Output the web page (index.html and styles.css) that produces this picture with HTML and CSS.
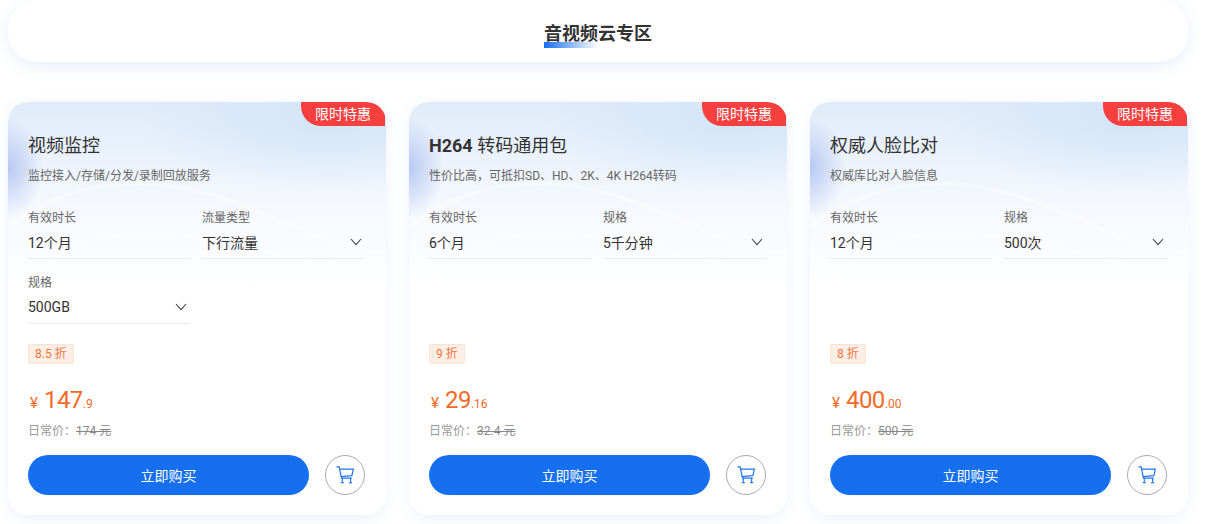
FILE: index.html
```html
<!DOCTYPE html>
<html lang="zh-CN">
<head>
  <meta charset="UTF-8" />
  <title>音视频云专区</title>
  <link rel="stylesheet" href="styles.css">
</head>
<body>
  <div class="page">
    <div class="zone-head">
      <h2 class="zone-title">音视频云专区</h2>
    </div>

    <div class="card-list">
      <div class="card">
        <svg class="card-wave" viewBox="0 0 378 180" preserveAspectRatio="none"><path d="M0 125C60 80 130 70 210 95S320 150 378 150" /><path d="M20 180C70 130 120 125 190 135S320 170 378 165" /></svg>
        <span class="promo">限时特惠</span>
        <h3 class="card-title">视频监控</h3>
        <p class="card-desc">监控接入/存储/分发/录制回放服务</p>
        <div class="fields">
          <div class="field">
            <span class="field-label">有效时长</span>
            <div class="field-value">12个月</div>
          </div>
          <div class="field">
            <span class="field-label">流量类型</span>
            <div class="field-value">下行流量
              <svg class="arrow" viewBox="0 0 12 8"><path d="M1 1l5 5.6L11 1" /></svg>
            </div>
          </div>
          <div class="field">
            <span class="field-label">规格</span>
            <div class="field-value">500GB
              <svg class="arrow" viewBox="0 0 12 8"><path d="M1 1l5 5.6L11 1" /></svg>
            </div>
          </div>
        </div>
        <span class="discount">8.5 折</span>
        <div class="price"><span class="yen">¥</span><span class="amount">147</span><span class="cents">.9</span></div>
        <div class="old-price">日常价：<s>174 元</s></div>
        <div class="actions">
          <button class="buy" type="button">立即购买</button>
          <button class="cart" type="button">
            <svg viewBox="0 0 18 18"><path d="M.5 .8h2.6l2.4 11.4h10.3M3.5 3.2h13.8l-1.4 6.4-11 1" /><path d="M6.3 12.2v3.6M14.6 12.2v3.6" /><path d="M4.8 16.6h3M13.1 16.6h3" /></svg>
          </button>
        </div>
      </div>

      <div class="card">
        <svg class="card-wave" viewBox="0 0 378 180" preserveAspectRatio="none"><path d="M0 125C60 80 130 70 210 95S320 150 378 150" /><path d="M20 180C70 130 120 125 190 135S320 170 378 165" /></svg>
        <span class="promo">限时特惠</span>
        <h3 class="card-title"><b>H264</b> 转码通用包</h3>
        <p class="card-desc">性价比高，可抵扣SD、HD、2K、4K H264转码</p>
        <div class="fields">
          <div class="field">
            <span class="field-label">有效时长</span>
            <div class="field-value">6个月</div>
          </div>
          <div class="field">
            <span class="field-label">规格</span>
            <div class="field-value">5千分钟
              <svg class="arrow" viewBox="0 0 12 8"><path d="M1 1l5 5.6L11 1" /></svg>
            </div>
          </div>
        </div>
        <span class="discount">9 折</span>
        <div class="price"><span class="yen">¥</span><span class="amount">29</span><span class="cents">.16</span></div>
        <div class="old-price">日常价：<s>32.4 元</s></div>
        <div class="actions">
          <button class="buy" type="button">立即购买</button>
          <button class="cart" type="button">
            <svg viewBox="0 0 18 18"><path d="M.5 .8h2.6l2.4 11.4h10.3M3.5 3.2h13.8l-1.4 6.4-11 1" /><path d="M6.3 12.2v3.6M14.6 12.2v3.6" /><path d="M4.8 16.6h3M13.1 16.6h3" /></svg>
          </button>
        </div>
      </div>

      <div class="card">
        <svg class="card-wave" viewBox="0 0 378 180" preserveAspectRatio="none"><path d="M0 125C60 80 130 70 210 95S320 150 378 150" /><path d="M20 180C70 130 120 125 190 135S320 170 378 165" /></svg>
        <span class="promo">限时特惠</span>
        <h3 class="card-title">权威人脸比对</h3>
        <p class="card-desc">权威库比对人脸信息</p>
        <div class="fields">
          <div class="field">
            <span class="field-label">有效时长</span>
            <div class="field-value">12个月</div>
          </div>
          <div class="field">
            <span class="field-label">规格</span>
            <div class="field-value">500次
              <svg class="arrow" viewBox="0 0 12 8"><path d="M1 1l5 5.6L11 1" /></svg>
            </div>
          </div>
        </div>
        <span class="discount">8 折</span>
        <div class="price"><span class="yen">¥</span><span class="amount">400</span><span class="cents">.00</span></div>
        <div class="old-price">日常价：<s>500 元</s></div>
        <div class="actions">
          <button class="buy" type="button">立即购买</button>
          <button class="cart" type="button">
            <svg viewBox="0 0 18 18"><path d="M.5 .8h2.6l2.4 11.4h10.3M3.5 3.2h13.8l-1.4 6.4-11 1" /><path d="M6.3 12.2v3.6M14.6 12.2v3.6" /><path d="M4.8 16.6h3M13.1 16.6h3" /></svg>
          </button>
        </div>
      </div>
    </div>
  </div>
</body>
</html>
```

FILE: styles.css
```css
* {
  box-sizing: border-box;
  font-family: 'Roboto', 'Noto Sans CJK SC', sans-serif;
}
html, body {
  height: 100%;
}
body {
  margin: 0;
  background: #fff;
  overflow: hidden;
}
.page {
  padding: 0 18px 0 8px;
}
.zone-head {
  height: 62px;
  background: #fff;
  border-radius: 28px;
  box-shadow: 0 4px 16px rgba(120, 165, 240, 0.18);
  display: flex;
  justify-content: center;
  padding-top: 22px;
}
.zone-title {
  position: relative;
  margin: 0;
  height: 24px;
  font-size: 18px;
  line-height: 24px;
  font-weight: 700;
  color: #333;
}
.zone-title::after {
  content: "";
  position: absolute;
  left: 0;
  top: 20px;
  width: 54px;
  height: 6px;
  background: linear-gradient(90deg, #166fee, rgba(22, 111, 238, 0));
}
.card-list {
  display: flex;
  gap: 23px;
  margin-top: 40px;
}
.card {
  position: relative;
  flex: 1;
  height: 413px;
  display: flex;
  flex-direction: column;
  align-items: flex-start;
  padding: 31px 20px 20px;
  border-radius: 20px;
  overflow: hidden;
  background:
    radial-gradient(35px 50px at 0 66px, rgba(170, 190, 240, 0.8), rgba(170, 190, 240, 0)),
    radial-gradient(190px 70px at 320px 20px, rgba(205, 227, 248, 0.8), rgba(205, 227, 248, 0)),
    linear-gradient(180deg, #e0ebf9 0, #e9f1fb 45px, #f2f6fd 85px, #f8fafe 125px, #fcfdff 160px, #fff 190px);
  box-shadow: 0 4px 14px rgba(120, 165, 240, 0.14);
}
.card-wave {
  position: absolute;
  left: 0;
  top: 0;
  width: 100%;
  height: 180px;
  fill: none;
  stroke: rgba(255, 255, 255, 0.35);
  stroke-width: 4;
}
.promo {
  position: absolute;
  right: 1px;
  top: 0;
  width: 84px;
  height: 24px;
  background: #f5403f;
  border-radius: 0 0 0 20px;
  color: #fff;
  font-size: 14px;
  line-height: 24px;
  text-align: center;
}
.card-title {
  position: relative;
  margin: 0;
  height: 26px;
  font-size: 18px;
  line-height: 26px;
  font-weight: 400;
  color: #333;
}
.card-title b {
  font-weight: 700;
}
.card-desc {
  position: relative;
  margin: 8px 0 0;
  font-size: 12px;
  line-height: 18px;
  color: #666;
}
.fields {
  position: relative;
  width: 100%;
  display: grid;
  grid-template-columns: 162px 163px;
  column-gap: 12px;
  row-gap: 15px;
  margin-top: 24px;
}
.field-label {
  display: block;
  height: 18px;
  font-size: 12px;
  line-height: 18px;
  color: #666;
}
.field-value {
  display: flex;
  align-items: center;
  justify-content: space-between;
  height: 32px;
  padding: 0 3px 2px 0;
  border-bottom: 1px solid #e8ebf3;
  font-size: 14px;
  color: #333;
}
.arrow {
  width: 12px;
  height: 8px;
  fill: none;
  stroke: #444;
  stroke-width: 1.1;
}
.discount {
  margin-top: auto;
  padding: 0 6px;
  height: 20px;
  background: #fdefe6;
  border: 1px solid #fde3d3;
  border-radius: 2px;
  font-size: 12px;
  line-height: 18px;
  color: #f5743a;
}
.price {
  display: flex;
  align-items: baseline;
  height: 32px;
  margin-top: 20px;
  color: #f26a26;
}
.yen {
  margin: 0 6px 0 2px;
  font-size: 15px;
}
.amount {
  font-size: 24px;
  line-height: 32px;
  letter-spacing: -0.5px;
}
.cents {
  font-size: 12px;
}
.old-price {
  margin-top: 6px;
  font-size: 12px;
  line-height: 18px;
  color: #999;
}
.old-price s {
  color: #888;
}
.actions {
  width: 100%;
  display: flex;
  justify-content: space-between;
  margin-top: 15px;
}
.buy {
  width: 281px;
  height: 40px;
  background: #166fee;
  border: none;
  border-radius: 20px;
  color: #fff;
  font-size: 14px;
  cursor: pointer;
}
.cart {
  display: flex;
  align-items: center;
  justify-content: center;
  width: 40px;
  height: 40px;
  margin-right: 1px;
  padding: 0;
  background: #fff;
  border: 1px solid #aaa;
  border-radius: 50%;
  cursor: pointer;
}
.cart svg {
  width: 18px;
  height: 18px;
  fill: none;
  stroke: #1f74ee;
  stroke-width: 1.2;
}
```
